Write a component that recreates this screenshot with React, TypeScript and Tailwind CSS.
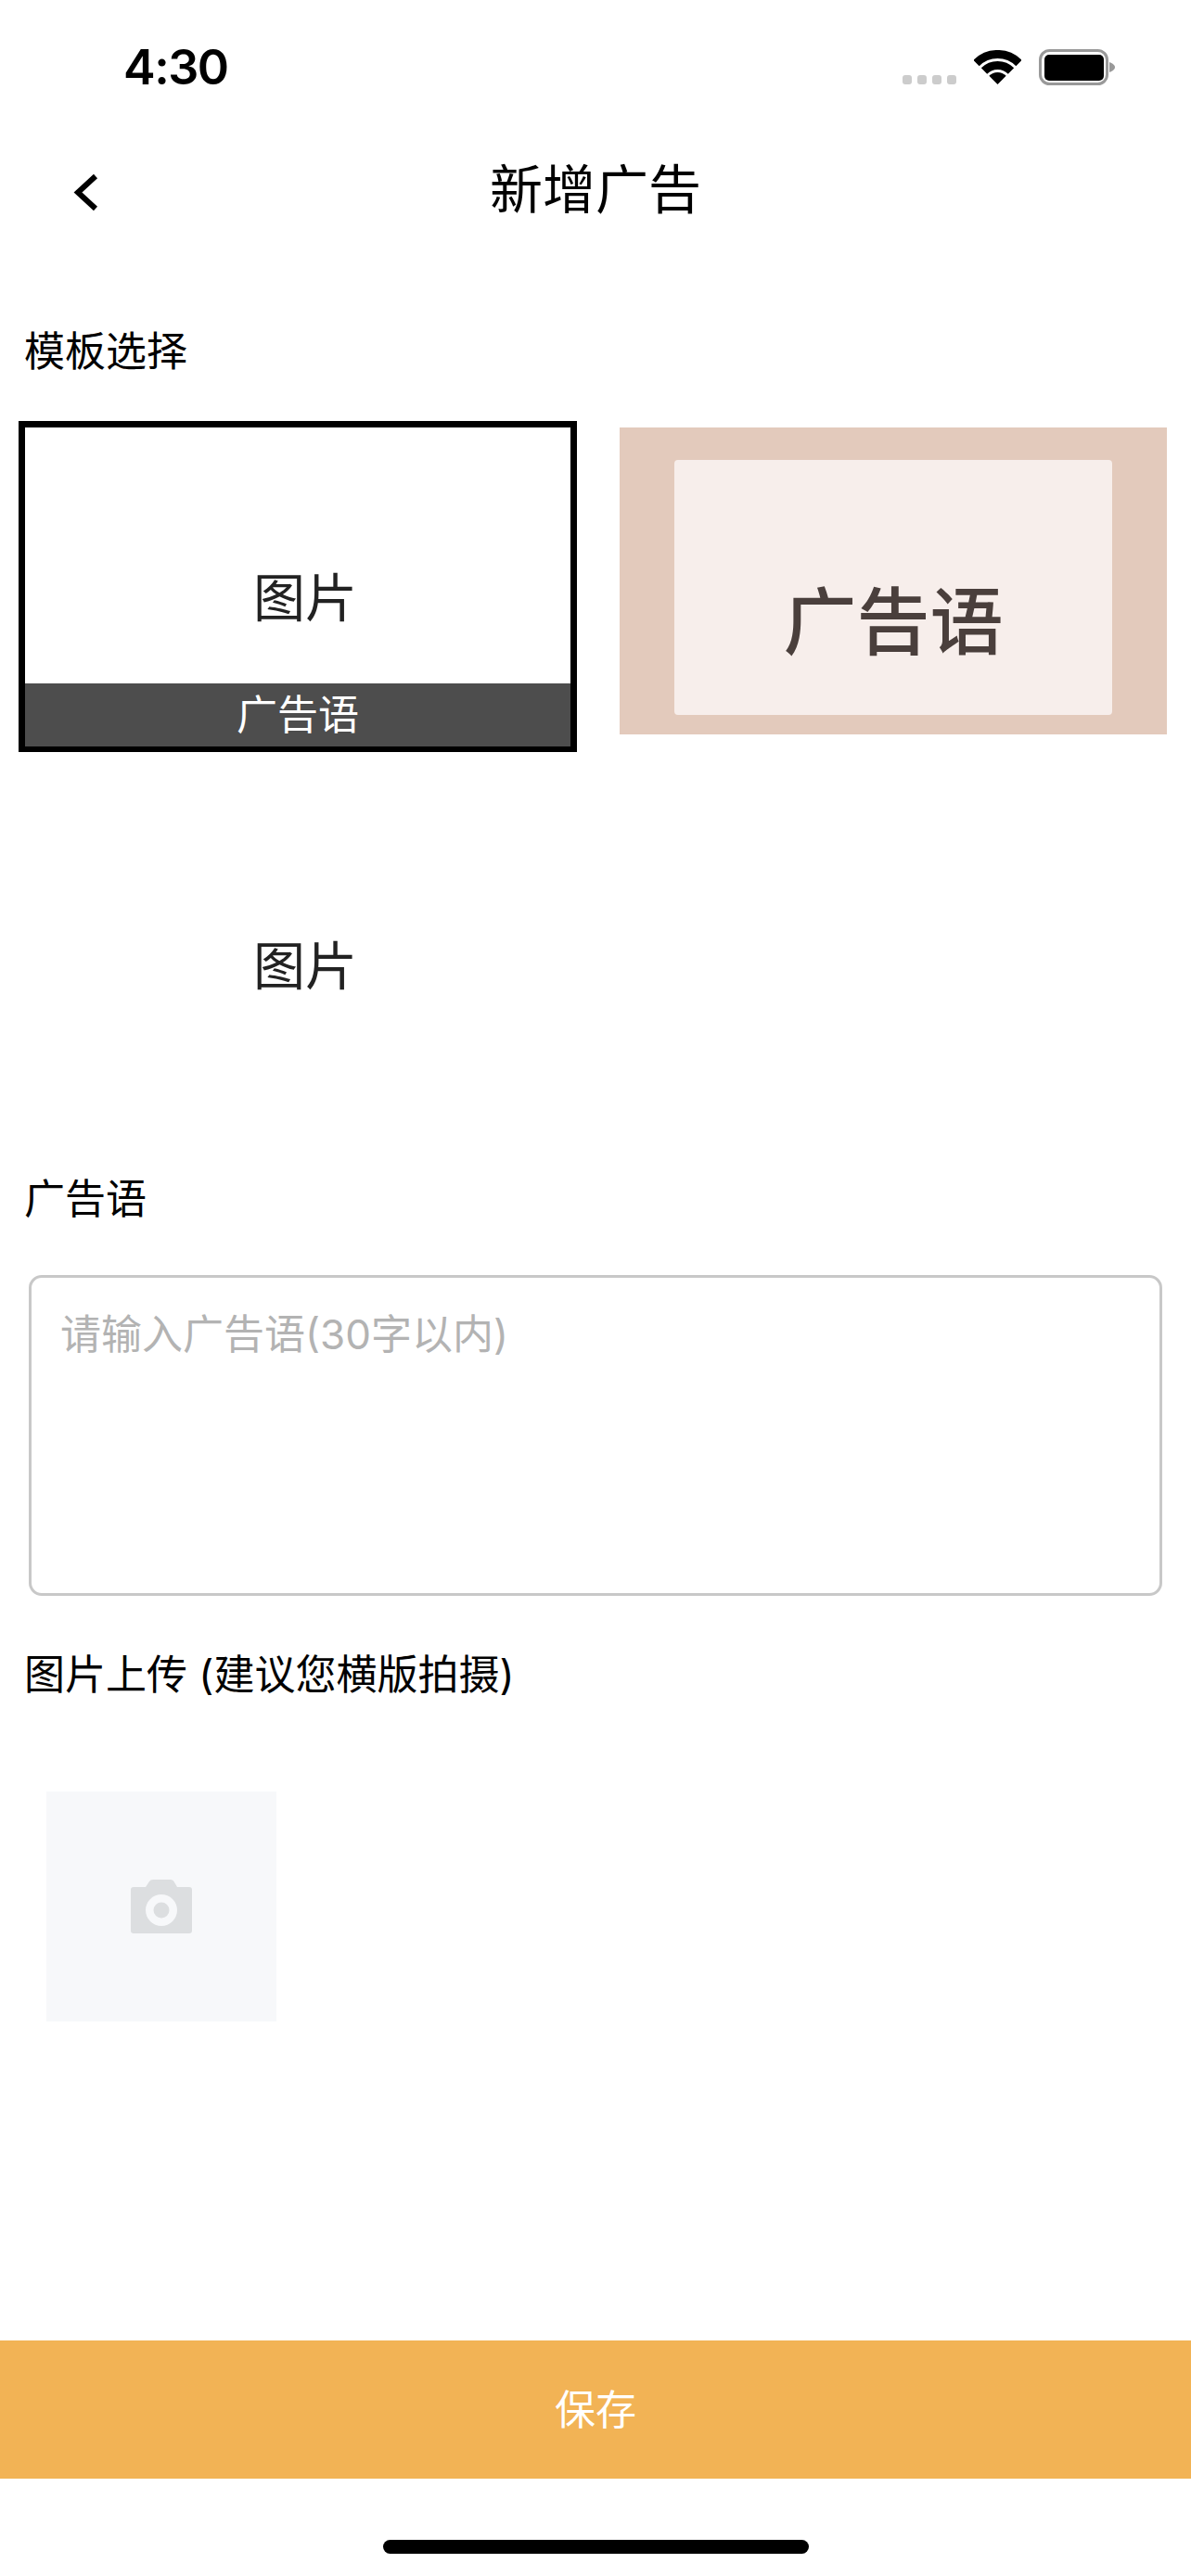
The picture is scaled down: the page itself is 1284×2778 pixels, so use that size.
import React from 'react';

const StatusBar: React.FC = () => (
  <div className="flex h-[130px] shrink-0 items-start pl-[133px] pt-[53px]">
    <span className="text-[52px] leading-[40px] font-semibold tracking-[-1.5px] text-black">4:30</span>
    <div className="ml-auto mr-[82px] flex items-end">
      <div className="mb-[1px] flex gap-[6px]">
        <span className="h-[10px] w-[10px] rounded-[3px] bg-[#cccccc]" />
        <span className="h-[10px] w-[10px] rounded-[3px] bg-[#cccccc]" />
        <span className="h-[10px] w-[10px] rounded-[3px] bg-[#cccccc]" />
        <span className="h-[10px] w-[10px] rounded-[3px] bg-[#cccccc]" />
      </div>
      <svg className="mb-[1px] ml-[19px]" width="51" height="37" viewBox="0 0 51 37">
        <path d="M2.5 14A32.5 32.5 0 0 1 48.5 14" fill="none" stroke="#000" strokeWidth="9" />
        <path d="M11 22.5A20.5 20.5 0 0 1 40 22.5" fill="none" stroke="#000" strokeWidth="9" />
        <path d="M25.5 37L16.3 27.8A13 13 0 0 1 34.7 27.8Z" fill="#000" />
      </svg>
      <svg className="ml-[19px]" width="82" height="39" viewBox="0 0 82 39">
        <rect x="1.5" y="1.5" width="72" height="36" rx="10" fill="none" stroke="#999999" strokeWidth="3" />
        <rect x="6" y="6" width="64" height="28" rx="5" fill="#000" />
        <path d="M76 14C79 15 82 17 82 19.5C82 22 79 24 76 25Z" fill="#999999" />
      </svg>
    </div>
  </div>
);

const NavBar: React.FC = () => (
  <div className="relative flex h-[150px] shrink-0 items-center justify-center">
    <svg className="absolute left-[78px] top-[57px]" width="29" height="41" viewBox="0 0 29 41">
      <path d="M25 3L6 20.5L25 38" fill="none" stroke="#000" strokeWidth="6" />
    </svg>
    <h1 className="text-[57px] leading-[60px] font-normal text-black">新增广告</h1>
  </div>
);

const Label: React.FC<{ className: string; children: React.ReactNode }> = ({ className, children }) => (
  <div className={`h-[60px] shrink-0 pl-[26px] text-[44px] leading-[62px] text-black ${className}`}>{children}</div>
);

const PictureText: React.FC = () => (
  <div className="flex justify-center pl-[16px] text-[56px] leading-[60px] text-[#222222]">图片</div>
);

const CameraIcon: React.FC = () => (
  <svg width="66" height="58" viewBox="0 0 66 58">
    <path
      d="M3 8H16L20 2Q21 0 24 0H43Q45 0 46.5 2L50 8H63Q66 8 66 11V55Q66 58 63 58H3Q0 58 0 55V11Q0 8 3 8Z"
      fill="#dcdee0"
    />
    <circle cx="33" cy="33" r="17" fill="#f7f8fa" />
    <circle cx="33" cy="33" r="8.5" fill="#dcdee0" />
  </svg>
);

export default function App() {
  return (
    <div className="flex h-[2778px] w-[1284px] flex-col overflow-hidden bg-white font-['Inter','Noto_Sans_CJK_SC',sans-serif]">
      <StatusBar />
      <NavBar />
      <Label className="mt-[68px]">模板选择</Label>

      <div className="mt-[46px] flex shrink-0 flex-wrap gap-x-[46px] gap-y-[40px] pl-[20px]">
        <div className="flex h-[357px] w-[602px] flex-col border-x-[7px] border-t-[7px] border-b-[6px] border-black">
          <div className="h-[276px] pt-[154px]">
            <PictureText />
          </div>
          <div className="flex h-[68px] items-center justify-center bg-[#4d4d4d] text-[44px] leading-[60px] text-white">广告语</div>
        </div>

        <div className="mt-[7px] flex h-[331px] w-[590px] bg-[#e3cabc] px-[59px] pb-[21px] pt-[35px]">
          <div className="flex flex-1 items-center justify-center rounded-[4px] bg-[#f7eeeb] pt-[74px] text-[79px] leading-[90px] font-medium text-[#4a3f3c]">广告语</div>
        </div>

        <div className="h-[357px] w-[602px] pt-[161px]">
          <PictureText />
        </div>
      </div>

      <Label className="mt-[54px]">广告语</Label>

      <textarea
        className="ml-[31px] mt-[53px] h-[346px] w-[1222px] shrink-0 resize-none rounded-[14px] border-[3px] border-[#c8c8c8] pl-[31px] pt-[31px] text-[44px] leading-[60px] text-black outline-none placeholder:text-[#b3b3b3]"
        placeholder="请输入广告语(30字以内)"
      />

      <Label className="mt-[54px]">图片上传 (建议您横版拍摄)</Label>

      <div className="ml-[50px] mt-[97px] flex h-[248px] w-[248px] shrink-0 items-center justify-center bg-[#f7f8fa]">
        <CameraIcon />
      </div>

      <div className="mt-auto flex h-[149px] shrink-0 items-center justify-center bg-[#f2b355] text-[44px] text-white">保存</div>
      <div className="flex h-[105px] shrink-0 justify-center pt-[66px]">
        <div className="h-[15px] w-[459px] rounded-full bg-black" />
      </div>
    </div>
  );
}
